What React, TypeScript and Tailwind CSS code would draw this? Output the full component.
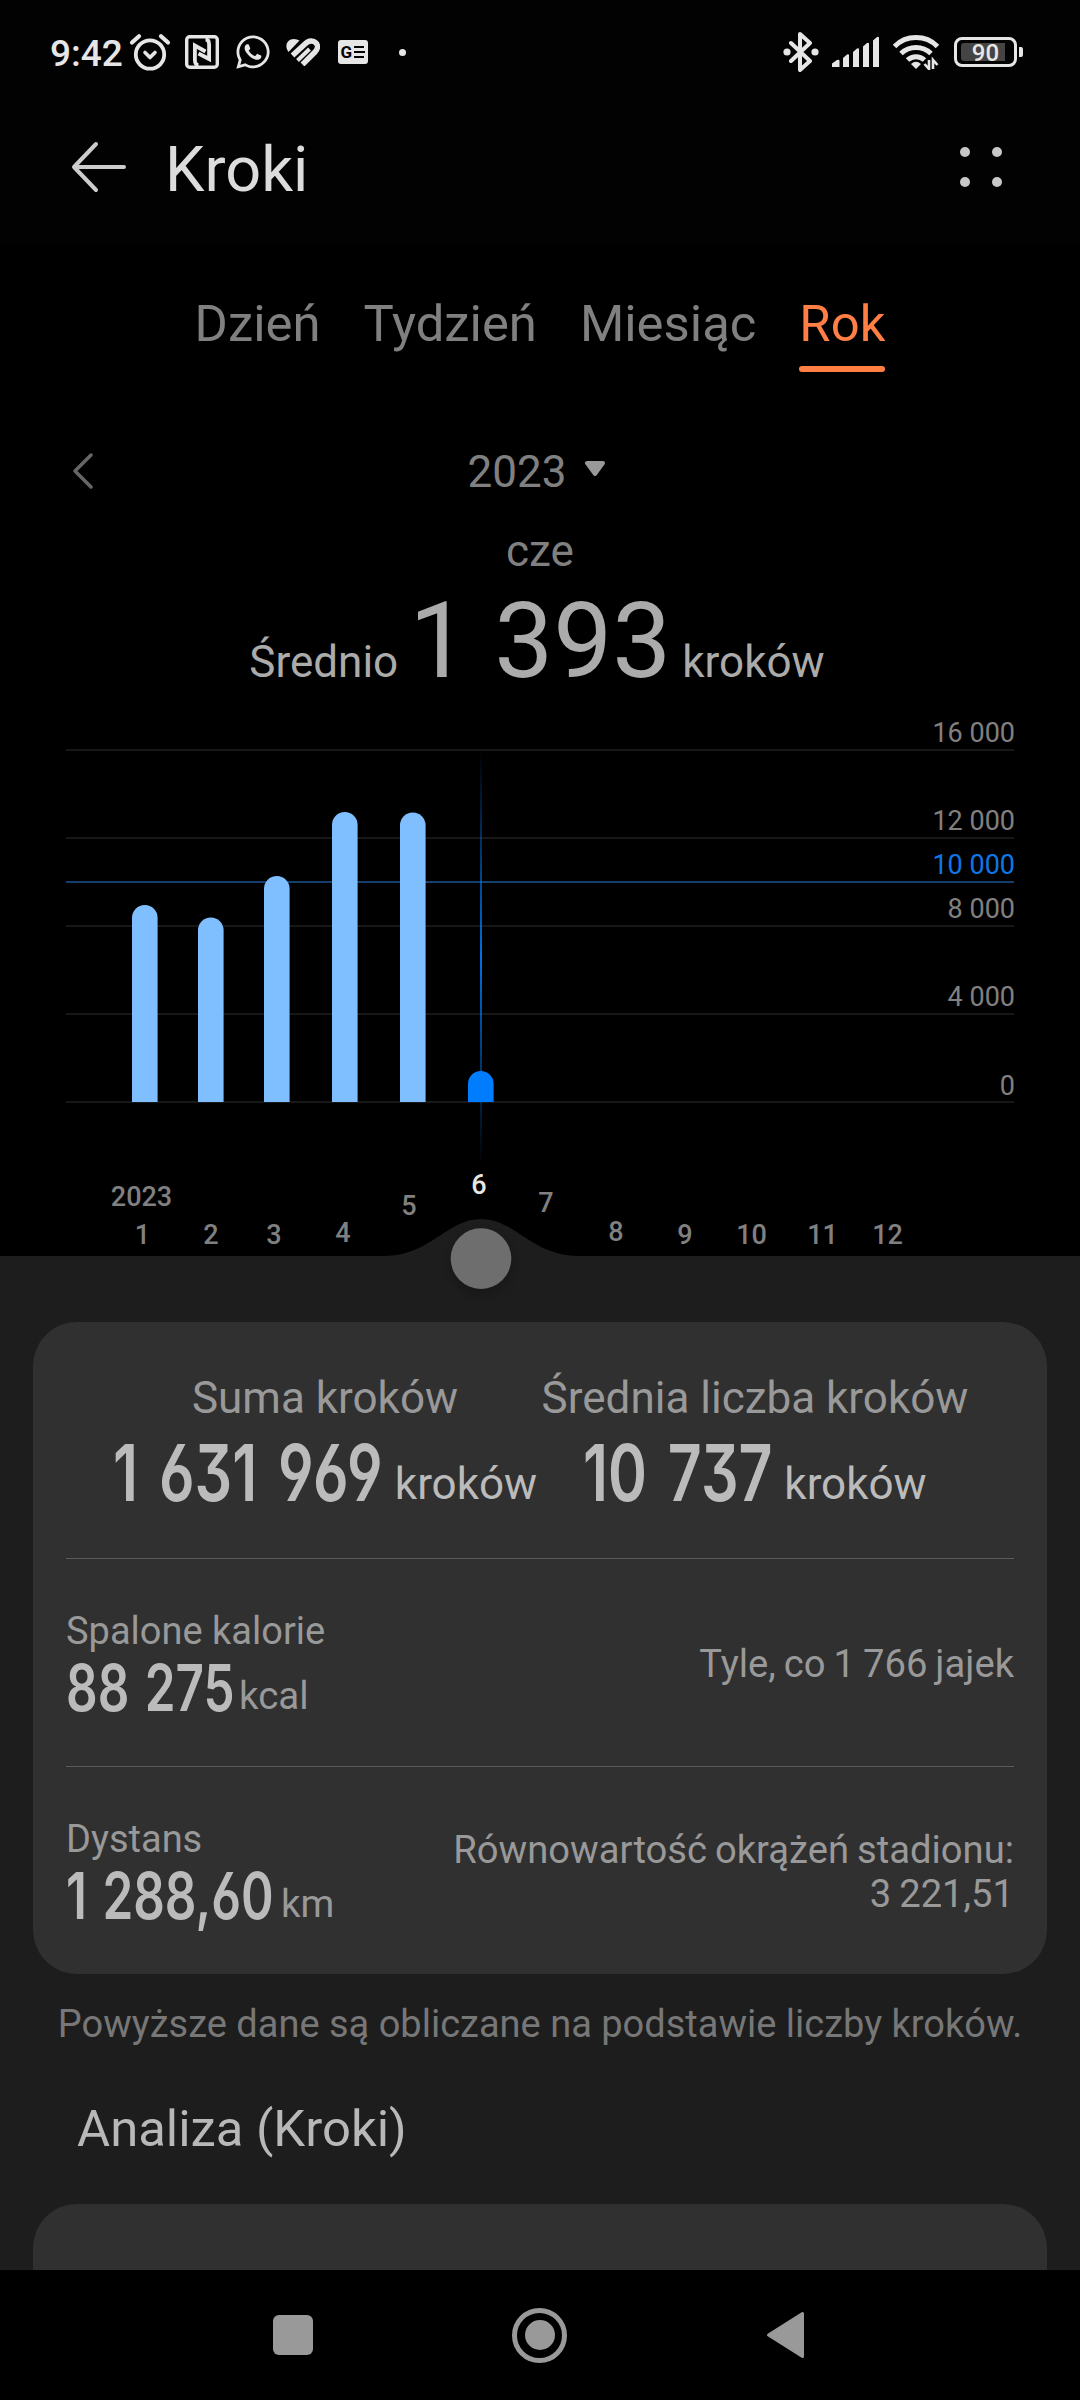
import { FaWhatsapp } from "react-icons/fa";

const TABS = ["Dzień", "Tydzień", "Miesiąc", "Rok"];

const GRID_LINES = [
  { y: 749, baseline: 742, label: "16 000" },
  { y: 837, baseline: 830, label: "12 000" },
  { y: 925, baseline: 918, label: "8 000" },
  { y: 1013, baseline: 1006, label: "4 000" },
  { y: 1101, baseline: 1095, label: "0" },
];

const BARS = [
  { x: 132, top: 905 },
  { x: 198, top: 917.5 },
  { x: 264, top: 876 },
  { x: 332, top: 812 },
  { x: 400, top: 812.5 },
  { x: 468, top: 1071, active: true },
];

const MONTHS = [
  { label: "1", x: 142.5, y: 1243.5 },
  { label: "2", x: 211, y: 1243.5 },
  { label: "3", x: 274, y: 1243.5 },
  { label: "4", x: 343, y: 1242 },
  { label: "5", x: 409, y: 1215 },
  { label: "6", x: 479, y: 1194, active: true },
  { label: "7", x: 546, y: 1212 },
  { label: "8", x: 616, y: 1241 },
  { label: "9", x: 685, y: 1243.5 },
  { label: "10", x: 751.5, y: 1243.5 },
  { label: "11", x: 822.5, y: 1243.5 },
  { label: "12", x: 887.5, y: 1243.5 },
];

function StatusBar() {
  return (
    <div className="flex h-[104px] items-center justify-between pl-[50px] pr-[57px] text-[#e6e6e6]">
      <div className="flex items-center">
        <span className="w-[79px] pt-1 text-[37px] leading-10 font-medium whitespace-nowrap">9:42</span>
        <svg className="h-[38px] w-[42px]" viewBox="0 0 42 38" fill="none" stroke="currentColor" strokeLinecap="round">
          <circle cx="21" cy="21.5" r="14.2" strokeWidth="3.8" />
          <path d="M3 9.5 10 3.2M39 9.5 32 3.2" strokeWidth="4.2" />
          <path d="m16 19.5 5 5 5-5" strokeWidth="3.6" strokeLinejoin="round" />
        </svg>
        <svg className="ml-[14px] h-[34px] w-[34px]" viewBox="0 0 34 34" fill="none" stroke="currentColor">
          <rect x="1.7" y="1.7" width="30.6" height="30.6" rx="3" strokeWidth="3.4" />
          <path d="M13.5 30c-2.5 0-3.6-2-3.6-5V10.500L20.500 16.500" strokeWidth="3.800" />
          <path d="M20.500 4.500c2.500 0 3.600 2 3.600 5V24L13.500 18.500" strokeWidth="3.800" />
        </svg>
        <FaWhatsapp className="ml-[15px] h-[38px] w-[38px]" />
        <svg className="ml-[14px] h-[28px] w-[34px]" viewBox="0 0 34 28" fill="none" stroke="currentColor" strokeWidth="5.5">
          <path d="M2.500 14C-2 8 1 1 8 1q3 0 5.500 1.500Z" fill="currentColor" stroke="none" />
          <path d="M6.500 17.500 19 6c4-4 8.500-3.500 11-1s1.500 6.500-1 9L16.500 26.500" />
          <path d="m11.500 22.500 12-11.500" strokeWidth="4" />
        </svg>
        <svg className="ml-[18px] h-[24px] w-[30px]" viewBox="0 0 30 24">
          <rect width="30" height="24" rx="3" fill="currentColor" />
          <text x="2.500" y="18" fontSize="17" fontWeight="700" fill="#020202">G</text>
          <path d="M16 7h10M16 12h11M16 17h10" stroke="#020202" strokeWidth="2" />
        </svg>
        <span className="ml-[31px] h-[7px] w-[7px] rounded-full bg-[#e6e6e6]" />
      </div>
      <div className="flex items-center">
        <svg className="h-[40px] w-[36px]" viewBox="0 0 36 40" fill="none" stroke="currentColor" strokeWidth="4" strokeLinejoin="round" strokeLinecap="round">
          <path d="m8 11 19 18-10 9V2l10 9L8 29" />
          <circle cx="4" cy="20" r="3.600" fill="currentColor" stroke="none" />
          <circle cx="32" cy="20" r="3.600" fill="currentColor" stroke="none" />
        </svg>
        <svg className="ml-[13px] h-[32px] w-[48px]" viewBox="0 0 48 32" fill="currentColor">
          <path d="M0 27.500 5 24q2.500-1 2.500 1v6H0ZM11 22l4-3.500q2-1 2 1V31h-6ZM21 16l4-3.500q2-1 2 1V31h-6ZM31 10.500l4-3.500q2-1 2 1V31h-6ZM41 4.500l4-3.500q2-1 2 1v29h-6Z" />
        </svg>
        <svg className="ml-[13px] h-[36px] w-[46px]" viewBox="0 0 46 36" fill="none" stroke="currentColor" strokeWidth="5">
          <path d="M1.500 12.500C13 .500 33 .500 44.500 12.500" />
          <path d="M8 19.500c8.500-8 21.500-8 30 0" />
          <path d="M14.500 26c5-4.500 12-4.500 17 0" />
          <path d="M18 30q5-4.500 10 0l-5 5Z" fill="currentColor" stroke="none" />
          <path d="M36 26v9l-4.500-5M40 35v-9l4.500 5" strokeWidth="2.600" />
        </svg>
        <div className="ml-[15px] flex h-[30px] w-[63px] items-center rounded-[8px] border-[3px] border-[#e6e6e6] pl-[4px]">
          <div className="flex h-[18px] w-[44px] items-center justify-center overflow-visible rounded-l-[3px] bg-[#444444] pl-[5px] pt-[2px] text-[24px] leading-[18px] font-medium">
            90
          </div>
        </div>
        <span className="ml-[2px] h-[10px] w-[4px] rounded-r-[2px] bg-[#e6e6e6]" />
      </div>
    </div>
  );
}

function Header() {
  return (
    <div className="flex h-[140px] items-center justify-between pb-[14px] pl-[71px] pr-[78px]">
      <div className="flex items-center">
        <svg className="h-[54px] w-[56px]" viewBox="0 0 56 54" fill="none" stroke="#cccccc" strokeWidth="4" strokeLinecap="round" strokeLinejoin="round">
          <path d="M25 4 3 27l22 23M3 27h50" />
        </svg>
        <h1 className="ml-[38px] pt-[5px] text-[63px] leading-[72px] text-[#dcdcdc]">Kroki</h1>
      </div>
      <div className="grid grid-cols-2 gap-x-[22px] gap-y-[20px]">
        <span className="h-[10px] w-[10px] rounded-full bg-[#c8c8c8]" />
        <span className="h-[10px] w-[10px] rounded-full bg-[#c8c8c8]" />
        <span className="h-[10px] w-[10px] rounded-full bg-[#c8c8c8]" />
        <span className="h-[10px] w-[10px] rounded-full bg-[#c8c8c8]" />
      </div>
    </div>
  );
}

function Tabs({ selected }: { selected: string }) {
  return (
    <div className="flex items-start justify-center gap-[43px] pt-[50px]">
      {TABS.map((tab) => (
        <button key={tab} className="text-[50.800px] leading-[60px]">
          <span className={tab === selected ? "block text-[#ff7f45]" : "block text-[#808080]"}>{tab}</span>
          {tab === selected ? <span className="mt-3 block h-[6px] rounded-full bg-[#ff7f45]" /> : null}
        </button>
      ))}
    </div>
  );
}

function StepsChart() {
  return (
    <svg className="block h-[621px] w-full" viewBox="0 701 1080 621" fontSize="27">
      <defs>
        <linearGradient id="cursor" x1="0" y1="0" x2="0" y2="1">
          <stop offset="0" stopColor="#007dff" stopOpacity="0" />
          <stop offset="0.500" stopColor="#007dff" stopOpacity="0.900" />
          <stop offset="1" stopColor="#007dff" stopOpacity="0" />
        </linearGradient>
        <filter id="knobShadow" x="-50%" y="-50%" width="200%" height="200%">
          <feDropShadow dx="0" dy="5" stdDeviation="7" floodColor="#000000" floodOpacity="0.250" />
        </filter>
      </defs>

      {GRID_LINES.map((line) => (
        <g key={line.y}>
          <rect x="66" y={line.y} width="948" height="2" fill="#171717" />
          <text x="1015" y={line.baseline} textAnchor="end" fill="#808080">{line.label}</text>
        </g>
      ))}
      <rect x="66" y="881" width="948" height="2" fill="#163f6e" />
      <text x="1015" y="874" textAnchor="end" fill="#0f76e8">10 000</text>

      <rect x="480" y="750" width="2" height="416" fill="url(#cursor)" />
      {BARS.map((bar) => (
        <path
          key={bar.x}
          d={`M${bar.x} 1102V${bar.top + 12.8}a12.800 12.800 0 0 1 25.600 0V1102Z`}
          fill={bar.active ? "#007dff" : "#80bfff"}
        />
      ))}

      <text x="141.500" y="1206" textAnchor="middle" fontWeight="500" fill="#808080">2023</text>
      {MONTHS.map((month) => (
        <text key={month.label} x={month.x} y={month.y} textAnchor="middle" fontWeight="500" fill={month.active ? "#e6e6e6" : "#808080"}>
          {month.label}
        </text>
      ))}

      <path d="M0 1256H384C430 1256 447 1219 481 1219S532 1256 578 1256H1080V1322H0Z" fill="#1d1d1d" />
      <circle cx="481" cy="1258.600" r="30.300" fill="#6e6e6e" filter="url(#knobShadow)" />
    </svg>
  );
}

function Total({ label, value, valueClass }: { label: string; value: string; valueClass: string }) {
  return (
    <div className="flex w-[430px] flex-col items-center whitespace-nowrap">
      <span className="text-[44px] leading-[60px] text-[#999999]">{label}</span>
      <div className="flex items-baseline text-[#bbbbbb]">
        <span className={valueClass}>
          <span className="inline-block origin-left scale-x-[0.757] font-['Inter'] text-[78px] leading-[90px] font-semibold [font-feature-settings:'ss01'] [word-spacing:8px]">
            {value}
          </span>
        </span>
        <span className="-translate-y-[2px] text-[44px] leading-[60px]">kroków</span>
      </div>
    </div>
  );
}

function Stat({ label, value, unit, valueClass, note }: { label: string; value: string; unit: string; valueClass: string; note: string[] }) {
  return (
    <div className="flex h-[207px] items-center justify-between text-[38px] leading-[44px] whitespace-nowrap text-[#999999]">
      <div className="pt-[7px]">
        <div>{label}</div>
        <div className="flex items-baseline">
          <span className={valueClass}>
            <span className="inline-block origin-left scale-x-[0.772] font-['Inter'] text-[64px] leading-[70px] font-semibold text-[#bbbbbb] [font-feature-settings:'ss01'] [word-spacing:4px]">
              {value}
            </span>
          </span>
          <span className="-translate-y-[2px] text-[38.500px]">{unit}</span>
        </div>
      </div>
      <div className="pt-[2px] text-right text-[38.200px] [word-spacing:-1.5px]">
        {note.map((line) => (
          <div key={line}>{line}</div>
        ))}
      </div>
    </div>
  );
}

function NavBar() {
  return (
    <div className="flex h-[130px] items-center bg-black pl-[273px]">
      <span className="h-[40px] w-[40px] rounded-[6px] bg-[#999999]" />
      <span className="ml-[199px] flex h-[55px] w-[55px] items-center justify-center rounded-full border-[5px] border-[#999999]">
        <span className="h-[30px] w-[30px] rounded-full bg-[#999999]" />
      </span>
      <svg className="ml-[199px] h-[48px] w-[38px]" viewBox="0 0 38 48" fill="#999999" stroke="#999999" strokeWidth="3" strokeLinejoin="round">
        <path d="M36.500 2.500v43L2.500 24Z" />
      </svg>
    </div>
  );
}

export default function App() {
  return (
    <div className="flex h-[2400px] w-[1080px] flex-col overflow-hidden bg-black font-['Roboto',sans-serif]">
      <div className="bg-[#020202]">
        <StatusBar />
        <Header />
      </div>

      <Tabs selected="Rok" />

      <div className="mt-[70px] grid h-[60px] grid-cols-[1fr_auto_1fr] items-center px-[73px]">
        <svg className="mb-[3px] h-[36px] w-[20px]" viewBox="0 0 20 36" fill="none" stroke="#666666" strokeWidth="3.500" strokeLinecap="round" strokeLinejoin="round">
          <path d="M18 2 2 18l16 16" />
        </svg>
        <div className="flex items-center pr-[7px] text-[44px] leading-[60px] text-[#808080]">
          2023
          <svg className="mb-[7px] ml-[19px] h-[15px] w-[20px]" viewBox="0 0 20 15" fill="#999999" stroke="#999999" strokeWidth="4" strokeLinejoin="round">
            <path d="M2 2h16l-8 11Z" />
          </svg>
        </div>
      </div>

      <div className="mt-[19px] text-center text-[44px] leading-[60px] text-[#808080]">cze</div>
      <div className="flex h-[120px] items-baseline justify-center gap-[11px] pt-px pr-[6px] text-[44px] text-[#ababab]">
        <span>Średnio</span>
        <span className="text-[105px] leading-[120px]">1 393</span>
        <span>kroków</span>
      </div>

      <StepsChart />

      <div className="h-[948px] overflow-hidden bg-[#1d1d1d]">
        <div className="mx-[33px] h-[652px] rounded-[44px] bg-[#303030] px-[33px]">
          <div className="flex h-[237px] justify-center border-b border-[#5a5a5a] pt-[46px]">
            <Total label="Suma kroków" value="1 631 969" valueClass="w-[282px]" />
            <Total label="Średnia liczba kroków" value="10 737" valueClass="w-[201px]" />
          </div>
          <Stat label="Spalone kalorie" value="88 275" unit="kcal" valueClass="w-[173px]" note={["Tyle, co 1 766 jajek"]} />
          <div className="h-px bg-[#5a5a5a]" />
          <Stat label="Dystans" value="1 288,60" unit="km" valueClass="w-[215px]" note={["Równowartość okrążeń stadionu:", "3 221,51"]} />
        </div>
        <p className="mt-[25px] text-center text-[38px] leading-[50px] whitespace-nowrap text-[#777777]">
          Powyższe dane są obliczane na podstawie liczby kroków.
        </p>
        <h2 className="mt-[50px] pl-[77px] text-[50.800px] leading-[60px] text-[#b8b8b8]">Analiza (Kroki)</h2>
        <div className="mx-[33px] mt-[45px] h-[120px] rounded-[44px] bg-[#303030]" />
      </div>

      <NavBar />
    </div>
  );
}
